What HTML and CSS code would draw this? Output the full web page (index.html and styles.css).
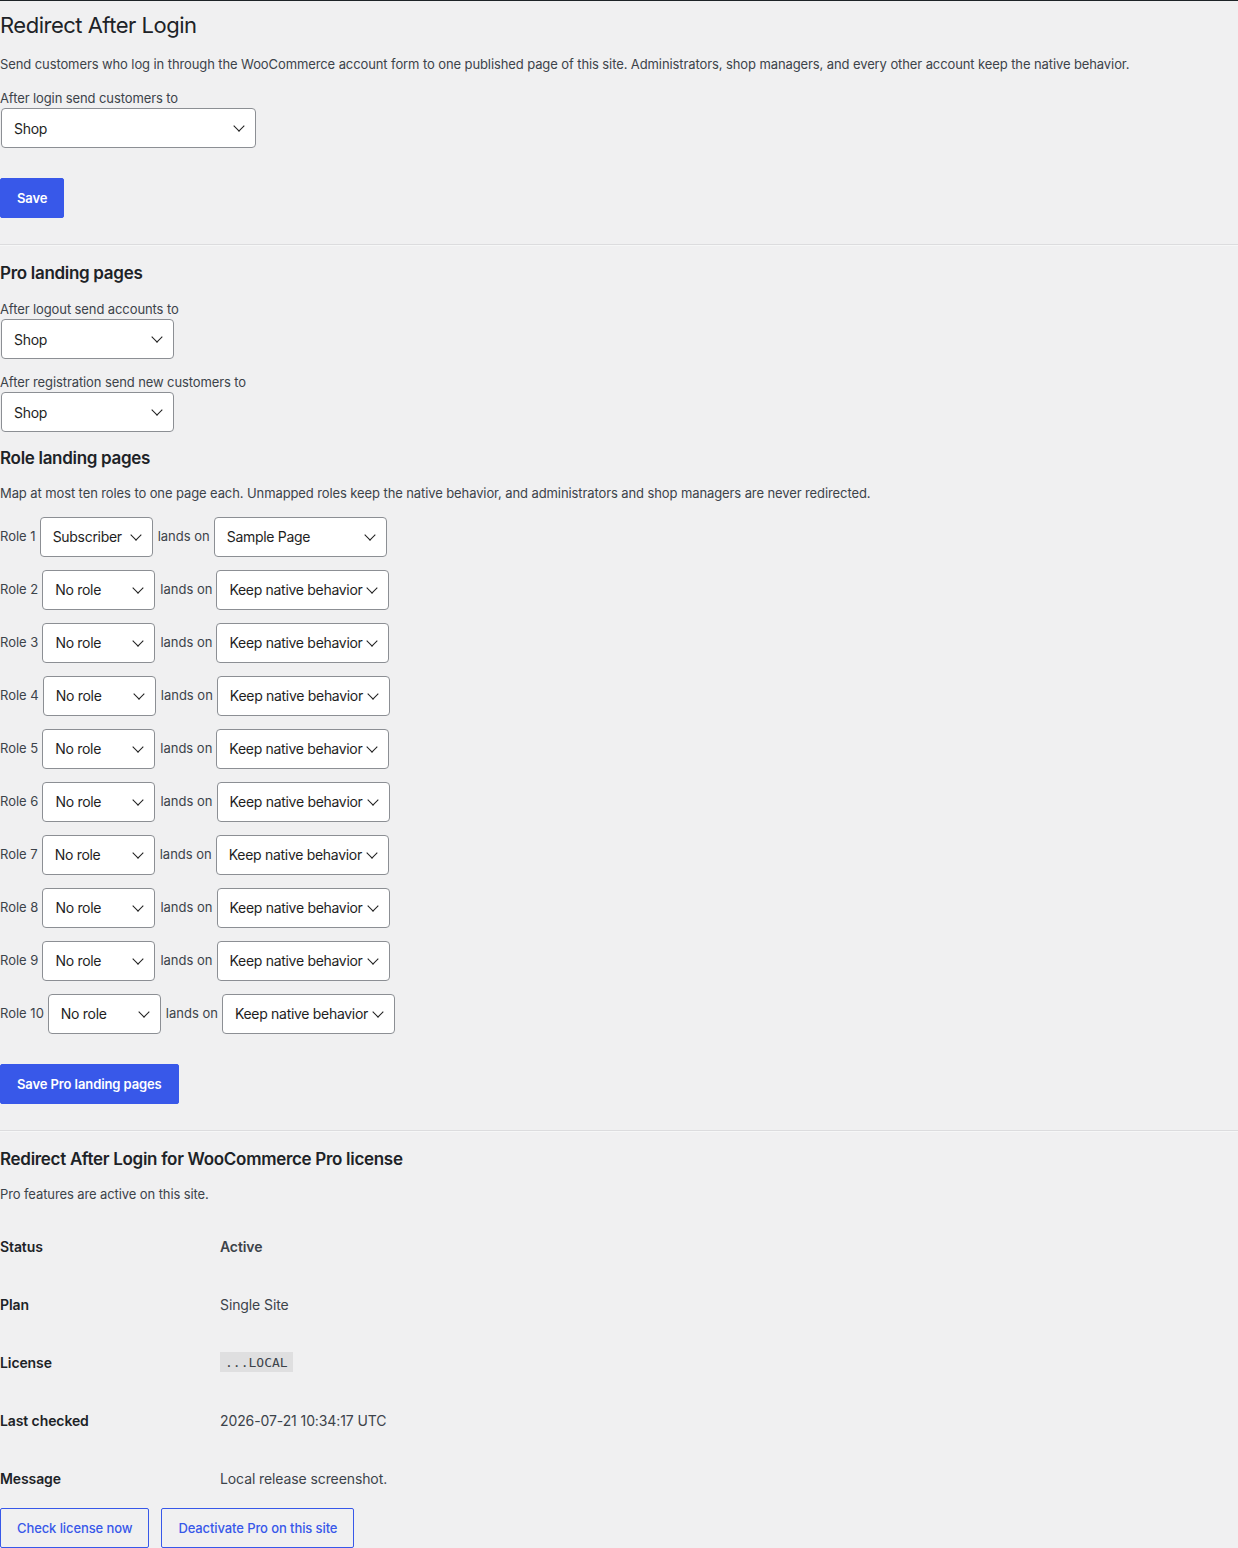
FILE: index.html
```html
<!DOCTYPE html>
<html lang="en">

<head>
    <meta charset="UTF-8">
    <title>Redirect After Login</title>
    <link rel="stylesheet" href="styles.css">
</head>

<body>

    <div class="wrap">
        <h1>Redirect After Login</h1>
        <p class="desc">Send customers who log in through the WooCommerce account form to one published page of this site. Administrators, shop managers, and every other account keep the native behavior.</p>

        <form class="block">
            <label class="field-label" for="login-target">After login send customers to</label>
            <span class="select-wrap"><select id="login-target" class="select-wide"><option>Shop</option></select></span>
            <div class="actions"><button type="button" class="btn btn-primary">Save</button></div>
        </form>

        <hr>

        <h2>Pro landing pages</h2>
        <label class="field-label first" for="logout-target">After logout send accounts to</label>
        <span class="select-wrap"><select id="logout-target" class="select-mid"><option>Shop</option></select></span>

        <label class="field-label" for="register-target">After registration send new customers to</label>
        <span class="select-wrap"><select id="register-target" class="select-mid"><option>Shop</option></select></span>

        <h2 class="role-title">Role landing pages</h2>
        <p class="desc small-gap">Map at most ten roles to one page each. Unmapped roles keep the native behavior, and administrators and shop managers are never redirected.</p>

        <div class="roles">
            <div class="role-row">
                <span class="role-label">Role 1</span>
                <span class="select-wrap"><select class="select-role"><option>Subscriber</option></select></span>
                <span class="role-label">lands on</span>
                <span class="select-wrap"><select class="select-mid"><option>Sample Page</option></select></span>
            </div>
            <div class="role-row">
                <span class="role-label">Role 2</span>
                <span class="select-wrap"><select class="select-role"><option>No role</option></select></span>
                <span class="role-label">lands on</span>
                <span class="select-wrap"><select class="select-mid"><option>Keep native behavior</option></select></span>
            </div>
            <div class="role-row">
                <span class="role-label">Role 3</span>
                <span class="select-wrap"><select class="select-role"><option>No role</option></select></span>
                <span class="role-label">lands on</span>
                <span class="select-wrap"><select class="select-mid"><option>Keep native behavior</option></select></span>
            </div>
            <div class="role-row">
                <span class="role-label">Role 4</span>
                <span class="select-wrap"><select class="select-role"><option>No role</option></select></span>
                <span class="role-label">lands on</span>
                <span class="select-wrap"><select class="select-mid"><option>Keep native behavior</option></select></span>
            </div>
            <div class="role-row">
                <span class="role-label">Role 5</span>
                <span class="select-wrap"><select class="select-role"><option>No role</option></select></span>
                <span class="role-label">lands on</span>
                <span class="select-wrap"><select class="select-mid"><option>Keep native behavior</option></select></span>
            </div>
            <div class="role-row">
                <span class="role-label">Role 6</span>
                <span class="select-wrap"><select class="select-role"><option>No role</option></select></span>
                <span class="role-label">lands on</span>
                <span class="select-wrap"><select class="select-mid"><option>Keep native behavior</option></select></span>
            </div>
            <div class="role-row">
                <span class="role-label">Role 7</span>
                <span class="select-wrap"><select class="select-role"><option>No role</option></select></span>
                <span class="role-label">lands on</span>
                <span class="select-wrap"><select class="select-mid"><option>Keep native behavior</option></select></span>
            </div>
            <div class="role-row">
                <span class="role-label">Role 8</span>
                <span class="select-wrap"><select class="select-role"><option>No role</option></select></span>
                <span class="role-label">lands on</span>
                <span class="select-wrap"><select class="select-mid"><option>Keep native behavior</option></select></span>
            </div>
            <div class="role-row">
                <span class="role-label">Role 9</span>
                <span class="select-wrap"><select class="select-role"><option>No role</option></select></span>
                <span class="role-label">lands on</span>
                <span class="select-wrap"><select class="select-mid"><option>Keep native behavior</option></select></span>
            </div>
            <div class="role-row">
                <span class="role-label">Role 10</span>
                <span class="select-wrap"><select class="select-role"><option>No role</option></select></span>
                <span class="role-label">lands on</span>
                <span class="select-wrap"><select class="select-mid"><option>Keep native behavior</option></select></span>
            </div>
        </div>

        <div class="actions"><button type="button" class="btn btn-primary">Save Pro landing pages</button></div>

        <hr>

        <h2 class="license-title">Redirect After Login for WooCommerce Pro license</h2>
        <p class="desc small-gap">Pro features are active on this site.</p>

        <div class="license-table">
            <div class="license-row"><span class="license-key">Status</span><strong class="license-value">Active</strong></div>
            <div class="license-row"><span class="license-key">Plan</span><span class="license-value">Single Site</span></div>
            <div class="license-row"><span class="license-key">License</span><span class="license-value"><code>...LOCAL</code></span></div>
            <div class="license-row"><span class="license-key">Last checked</span><span class="license-value">2026-07-21 10:34:17 UTC</span></div>
            <div class="license-row"><span class="license-key">Message</span><span class="license-value">Local release screenshot.</span></div>
        </div>

        <div class="license-actions">
            <button type="button" class="btn btn-secondary">Check license now</button>
            <button type="button" class="btn btn-secondary">Deactivate Pro on this site</button>
        </div>
    </div>

</body>

</html>
```

FILE: styles.css
```css
body {
    margin: 0;
    background-color: #f0f0f1;
    border-top: 1px solid #1d2327;
    color: #3c434a;
    font-family: Inter, "Noto Sans", sans-serif;
    font-size: 13px;
    line-height: 1.5;
    letter-spacing: -0.1px;
}

.wrap {
    padding-bottom: 40px;
}

h1 {
    margin: 0;
    padding: 10px 0 4px;
    font-size: 22px;
    font-weight: 400;
    line-height: 1.3;
    letter-spacing: -0.5px;
    color: #1d2327;
}

h2 {
    margin: 16px 0 0;
    font-size: 17px;
    font-weight: 600;
    line-height: 22px;
    letter-spacing: -0.3px;
    color: #1d2327;
}

.desc {
    margin: 11px 0 0;
}

.desc.small-gap {
    margin-top: 15px;
}

.field-label {
    display: block;
    margin-top: 14px;
    line-height: 19px;
}

.field-label.first {
    margin-top: 16px;
}

.block .field-label {
    margin-top: 15px;
}

/* selects: native look replaced by a flat box with a chevron */
.select-wrap {
    position: relative;
    display: inline-block;
    margin: 0 1px;
    vertical-align: middle;
}

.select-wrap::after {
    content: "";
    position: absolute;
    right: 13px;
    top: 14px;
    width: 7px;
    height: 7px;
    border-right: 1.8px solid #1e1e1e;
    border-bottom: 1.8px solid #1e1e1e;
    transform: rotate(45deg);
    pointer-events: none;
}

select {
    appearance: none;
    -webkit-appearance: none;
    display: block;
    height: 40px;
    padding: 0 12px;
    border: 1px solid #8c8f94;
    border-radius: 4px;
    background: #fff;
    color: #1e1e1e;
    font-family: inherit;
    font-size: 14px;
    letter-spacing: -0.3px;
}

.select-wide {
    width: 255px;
}

.select-mid {
    width: 173px;
}

.select-role {
    width: 113px;
}

.roles {
    margin-top: 13px;
    display: flex;
    flex-direction: column;
    gap: 13px;
}

.role-row {
    display: flex;
    align-items: center;
    gap: 3px;
}

.role-row .role-label {
    white-space: nowrap;
    letter-spacing: 0;
}

.role-row .select-wrap + .role-label {
    margin-left: 1px;
}

.actions {
    margin-top: 30px;
}

.btn {
    height: 40px;
    padding: 0 16px;
    border-radius: 2px;
    font-family: inherit;
    font-size: 13px;
    font-weight: 600;
    letter-spacing: -0.1px;
    cursor: pointer;
}

.btn-primary {
    background-color: #3858e9;
    border: 1px solid #3858e9;
    color: #fff;
}

.btn-secondary {
    background: transparent;
    border: 1px solid #3858e9;
    color: #3858e9;
    font-weight: 500;
}

hr {
    margin: 26px 0 0;
    border: 0;
    border-top: 1px solid #dcdcde;
    border-bottom: 1px solid #f6f7f7;
}

.role-title {
    margin-top: 15px;
}

.license-title {
    margin-top: 16px;
}

.license-table {
    margin-top: 13px;
}

.license-row {
    display: flex;
    align-items: center;
    height: 58px;
}

.license-key {
    width: 220px;
    font-size: 14px;
    font-weight: 600;
    color: #1d2327;
}

.license-value {
    font-size: 14px;
}

strong.license-value {
    font-weight: 600;
    color: #3c434a;
}

code {
    padding: 3px 5px 2px;
    background: rgba(0, 0, 0, 0.07);
    font-family: "DejaVu Sans Mono", monospace;
    font-size: 13px;
    letter-spacing: 0;
    color: #3c434a;
}

.license-actions {
    margin-top: 1px;
    display: flex;
    gap: 12px;
}
```
